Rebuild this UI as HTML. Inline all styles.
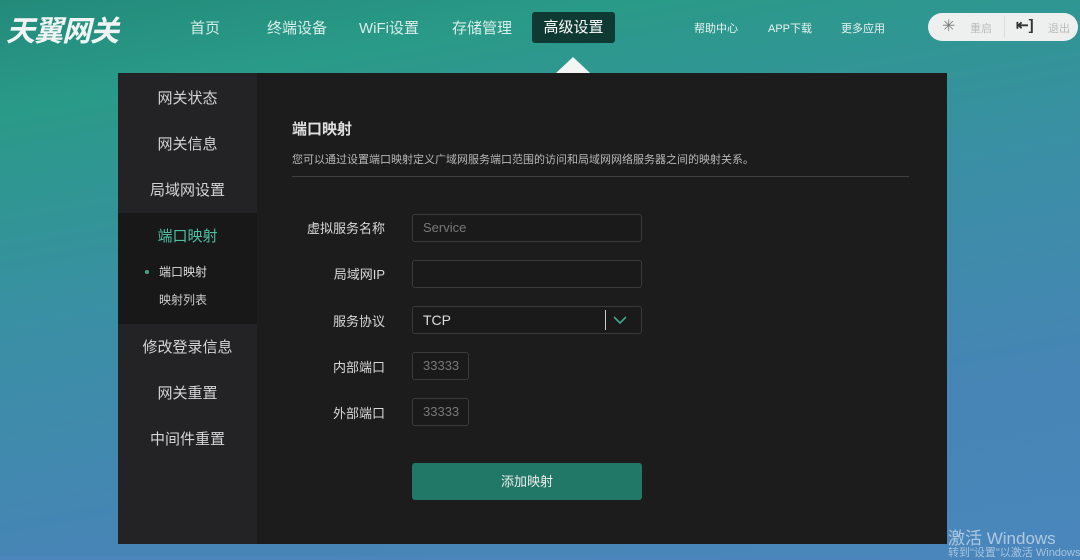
<!DOCTYPE html>
<html><head><meta charset="utf-8"><style>
*{margin:0;padding:0;box-sizing:border-box}
html{background:#4a86bc}
body{width:1080px;height:556px;overflow:hidden;position:relative;font-family:"Liberation Sans","Noto Sans CJK SC",sans-serif;
background:linear-gradient(170deg,#238a7a 0%,#2a9a88 15%,#3a8fa5 45%,#4685b5 75%,#4a86bc 100%);}
.logo{position:absolute;left:6px;top:8px;font-size:29px;font-weight:bold;font-style:italic;letter-spacing:-1px;color:#f0f4f4}
.nav{position:absolute;top:17px;font-size:15px;color:#d8eee9}
.navact{position:absolute;left:532px;top:12px;width:83px;height:31px;background:#0f3a33;border-radius:3px;color:#fff;font-size:15px;text-align:center;line-height:31px}
.tri{position:absolute;left:556px;top:57px;width:0;height:0;border-left:17px solid transparent;border-right:17px solid transparent;border-bottom:16px solid #f4f6f6}
.sm{position:absolute;top:20px;font-size:11px;color:#e8f4f0}
.pill{position:absolute;left:928px;top:13px;width:150px;height:28px;background:#eef0ef;border-radius:14px}
.panel{position:absolute;left:118px;top:73px;width:829px;height:471px;background:#1c1c1c}
.side{position:absolute;left:0;top:0;width:139px;height:471px;background:#232325}
.si{position:absolute;width:139px;text-align:center;font-size:15px;color:#d4d4d4}
.act{position:absolute;left:0;top:140px;width:139px;height:111px;background:#181819}
.lbl{position:absolute;font-size:13px;color:#d8d8d8;text-align:right;width:120px;left:147px}
.inp{position:absolute;left:294px;width:230px;height:28px;border:1px solid #3a3a3a;border-radius:3px;background:#1a1a1a;font-size:13px;color:#777;padding-left:10px;line-height:26px}
</style></head><body>
<div class="logo">天翼网关</div>
<div class="nav" style="left:190px">首页</div>
<div class="nav" style="left:267px">终端设备</div>
<div class="nav" style="left:359px">WiFi设置</div>
<div class="nav" style="left:452px">存储管理</div>
<div class="navact">高级设置</div>
<div class="tri"></div>
<div class="sm" style="left:694px">帮助中心</div>
<div class="sm" style="left:768px">APP下载</div>
<div class="sm" style="left:841px">更多应用</div>
<div class="pill">
<span style="position:absolute;left:14px;top:3px;font-size:16px;color:#777">✳</span>
<span style="position:absolute;left:42px;top:7px;font-size:11px;color:#bbb">重启</span>
<span style="position:absolute;left:76px;top:3px;width:1px;height:22px;background:#ddd"></span>
<span style="position:absolute;left:88px;top:3px;font-size:15px;color:#333;font-weight:bold">⇤]</span>
<span style="position:absolute;left:120px;top:7px;font-size:11px;color:#bbb">退出</span>
</div>
<div class="panel">
<div class="side">
<div class="act"></div>
<div class="si" style="top:14px">网关状态</div>
<div class="si" style="top:60px">网关信息</div>
<div class="si" style="top:106px">局域网设置</div>
<div class="si" style="top:152px;color:#4fbfa0">端口映射</div>
<div style="position:absolute;left:27px;top:197px;width:4px;height:4px;background:#3fa88c;border-radius:50%"></div>
<div style="position:absolute;left:41px;top:190px;font-size:12px;color:#ddd">端口映射</div>
<div style="position:absolute;left:41px;top:218px;font-size:12px;color:#ccc">映射列表</div>
<div class="si" style="top:263px">修改登录信息</div>
<div class="si" style="top:309px">网关重置</div>
<div class="si" style="top:355px">中间件重置</div>
</div>
<div style="position:absolute;left:174px;top:45px;font-size:15px;color:#e0e0e0;font-weight:bold">端口映射</div>
<div style="position:absolute;left:174px;top:78px;font-size:11px;color:#b8b8b8">您可以通过设置端口映射定义广域网服务端口范围的访问和局域网网络服务器之间的映射关系。</div>
<div style="position:absolute;left:174px;top:103px;width:617px;height:1px;background:#3f3f3f"></div>
<div class="lbl" style="top:145px">虚拟服务名称</div>
<div class="inp" style="top:141px">Service</div>
<div class="lbl" style="top:191px">局域网IP</div>
<div class="inp" style="top:187px"></div>
<div class="lbl" style="top:238px">服务协议</div>
<div class="inp" style="top:233px;color:#ddd;font-size:14px">TCP<span style="position:absolute;left:192px;top:3px;width:1px;height:20px;background:#ccc"></span><svg style="position:absolute;left:200px;top:8px" width="14" height="10" viewBox="0 0 14 10"><path d="M1 2l6 6 6-6" fill="none" stroke="#3fa88c" stroke-width="1.6"/></svg></div>
<div class="lbl" style="top:284px">内部端口</div>
<div class="inp" style="top:279px;width:57px;padding-left:10px">33333</div>
<div class="lbl" style="top:330px">外部端口</div>
<div class="inp" style="top:325px;width:57px;padding-left:10px">33333</div>
<div style="position:absolute;left:294px;top:390px;width:230px;height:37px;background:#217866;border-radius:3px;color:#eee;font-size:13px;text-align:center;line-height:37px">添加映射</div>
</div>
<div style="position:absolute;left:948px;top:524px;font-size:17px;color:rgba(255,255,255,.55)">激活 Windows</div>
<div style="position:absolute;left:948px;top:544px;font-size:11px;color:rgba(255,255,255,.5);white-space:nowrap">转到"设置"以激活 Windows</div>
</body></html>
